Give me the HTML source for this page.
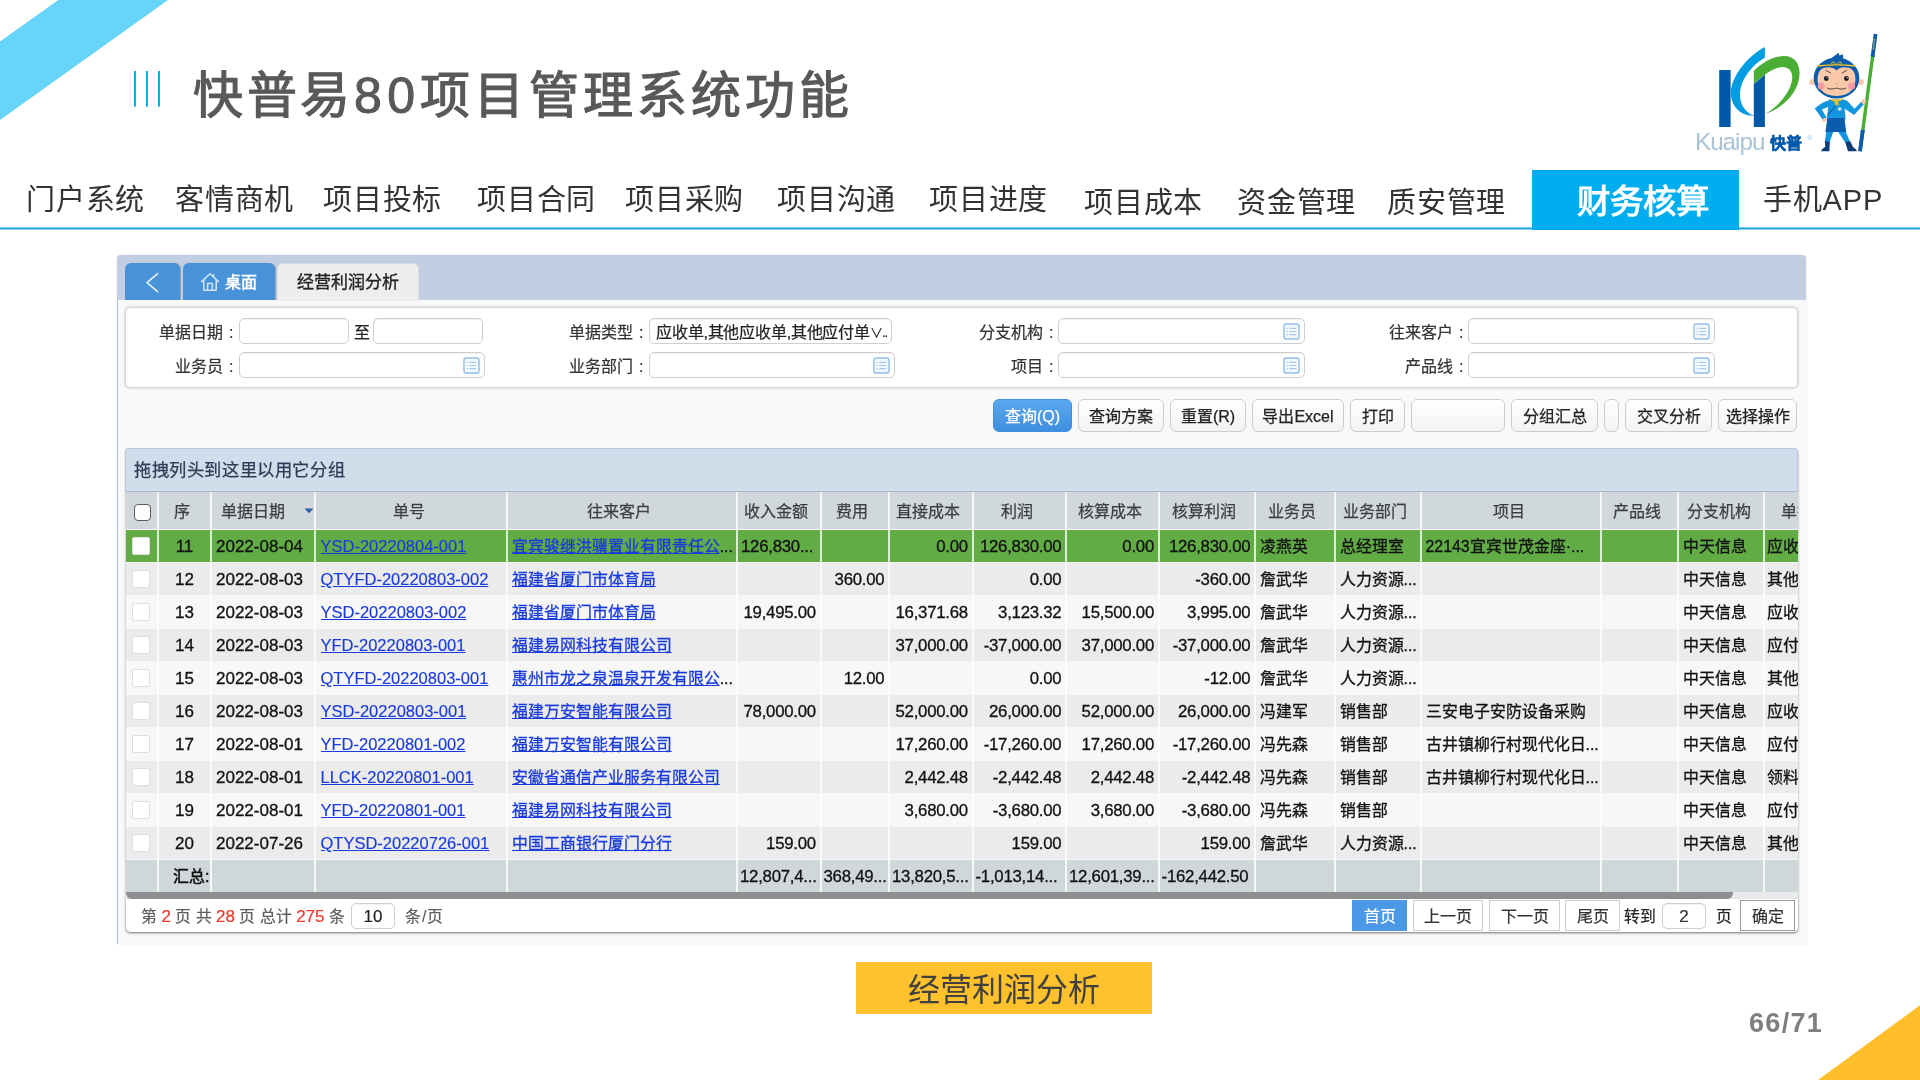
<!DOCTYPE html>
<html lang="zh-CN"><head><meta charset="utf-8"><title>快普易80项目管理系统功能</title>
<style>
html,body{margin:0;padding:0;}
body{width:1920px;height:1080px;position:relative;overflow:hidden;background:#fff;
 font-family:"Liberation Sans",sans-serif;color:#222;will-change:transform;}
.a{position:absolute;white-space:nowrap;}
.t{position:absolute;white-space:nowrap;overflow:hidden;}
/* slide chrome */
#title{left:193px;top:61px;height:70px;line-height:70px;font-size:50px;font-weight:400;color:#595959;letter-spacing:4.1px;-webkit-text-stroke:1.2px #595959;}
#title i{font-style:normal;letter-spacing:3.7px;}
#title span{letter-spacing:5.3px;-webkit-text-stroke-width:1px;}
.nav{top:180px;height:40px;line-height:40px;font-size:29px;color:#333;letter-spacing:0.8px;}
.nav.lo{top:183px;}
#navact{left:1532px;top:170px;width:207px;height:59.5px;background:#00aeef;}
#navactt{left:1532px;top:170px;width:207px;height:59px;line-height:64px;text-align:center;color:#fff;font-size:33.5px;font-weight:bold;letter-spacing:0.2px;text-indent:15px;}
#cap{left:856px;top:962px;width:296px;height:52px;background:#ffc12c;line-height:56px;text-align:center;font-size:32px;color:#404040;}
#lgk{left:1695px;top:127px;height:30px;line-height:30px;font-size:24.3px;letter-spacing:-1.05px;color:#a9c3d6;}
#lgc{left:1770px;top:131px;height:26px;line-height:26px;font-size:16px;font-weight:bold;color:#0058a9;-webkit-text-stroke:0.3px #0058a9;letter-spacing:0.2px;}
#pg{left:1749px;top:1005px;height:36px;line-height:36px;font-size:27px;font-weight:bold;color:#7f7f7f;letter-spacing:1.3px;}

/* ---- embedded app screenshot ---- */
#frame{left:117px;top:255px;width:1689px;height:689px;background:#f9f9f9;border-radius:4px 4px 0 0;box-shadow:0 0 3px rgba(0,0,0,.10);}
#frameL{left:117px;top:300px;width:1px;height:644px;background:#adc0da;}
#tabband{left:117px;top:255px;width:1689px;height:45px;background:#c2cee2;border-radius:4px 4px 0 0;}
.tabb{top:263px;height:37px;background:#4892d8;border-radius:6px 6px 0 0;box-shadow:1px 0 1px rgba(0,0,0,.22);}
#tabact{left:277px;top:263px;width:142px;height:38px;background:#eee;border-radius:6px 6px 0 0;border:1px solid #d9dde5;border-bottom:none;box-sizing:border-box;}
#tabactt{left:277px;top:264px;width:142px;height:37px;line-height:37px;text-align:center;font-size:17px;color:#222;-webkit-text-stroke:0.35px #222;}
#tabhome{left:225px;top:264px;height:37px;line-height:37px;font-size:16px;font-weight:bold;color:#fff;}
#card{left:125px;top:307px;width:1673px;height:81px;background:#fff;border:1px solid #d6d6d6;border-radius:5px;box-sizing:border-box;box-shadow:0 0 3px rgba(0,0,0,.22);}
.lab{height:28px;line-height:29px;font-size:16px;color:#333;-webkit-text-stroke-width:0.22px;text-align:right;width:120px;}
.lab i{font-style:normal;margin-left:6px;}
.inp{height:26px;background:#fff;border:1px solid #cfcfcf;border-radius:5px;box-sizing:border-box;box-shadow:inset 0 1px 1px rgba(0,0,0,.06);}
.inpt{height:28px;line-height:29px;font-size:16px;color:#222;-webkit-text-stroke-width:0.2px;}
.btn{top:399px;height:33px;line-height:33px;text-align:center;font-size:16px;color:#222;-webkit-text-stroke-width:0.25px;background:linear-gradient(#fff,#f3f3f3);border:1px solid #cdcdcd;border-radius:6px;box-sizing:border-box;}
.btn.pri{background:linear-gradient(#5aa8ee,#3f8fe0);border-color:#3f8fe0;color:#fff;}
#grp{left:125px;top:448px;width:1673px;height:44px;background:#d2ddeb;border:1px solid #b9c8dc;border-bottom:1px solid #a9bad2;border-radius:4px 4px 0 0;box-sizing:border-box;}
#grpt{left:134px;top:449px;height:43px;line-height:43px;font-size:17.25px;letter-spacing:0.6px;color:#2b3c55;-webkit-text-stroke-width:0.25px;}
#gridsh{left:125.5px;top:449px;width:1672.8px;height:482.5px;border-radius:4px;box-shadow:0 1px 3px rgba(0,0,0,.35);background:#f8f8f8;}
#thead{left:126px;top:492px;width:1672px;height:37px;background:#d1d8dc;}
.th{top:493px;height:37px;line-height:38px;font-size:16px;color:#3e3e3e;text-align:center;-webkit-text-stroke-width:0.25px;}
.vs{width:2px;background:rgba(255,255,255,.78);}
.row{left:126px;width:1672px;height:32px;}
.c{height:33px;line-height:33px;font-size:15.9px;color:#111;-webkit-text-stroke-width:0.3px;}
.n{font-size:17px;text-align:right;}
.m{font-size:16.8px;letter-spacing:-0.25px;text-align:right;}
.l{font-size:16.5px;color:#1a3bdc;text-decoration:underline;-webkit-text-stroke-width:0.15px;}
.lc{color:#1a3bdc;text-decoration:underline;}
.cb{left:132px;width:18px;height:18px;background:#fff;border:1px solid #dedede;border-radius:2px;box-sizing:border-box;}
#hcb{left:134px;top:504px;width:17px;height:17px;background:#fff;border:1.5px solid #5a5a5a;border-radius:4px;box-sizing:border-box;}
#sbtrack{left:126px;top:892px;width:1672px;height:7px;background:#e9e9e9;}
#sb{left:126px;top:892px;width:1607px;height:7px;background:#8e8e8e;border-radius:0 0 6px 6px;}
#foot{left:126px;top:899px;width:1672px;height:33px;background:#fff;border-radius:0 0 5px 5px;box-shadow:0 1px 2px rgba(0,0,0,.25);}
.ft{top:900px;height:33px;line-height:33px;font-size:15.8px;color:#5c5c5c;-webkit-text-stroke-width:0.2px;}
.ft b{font-weight:normal;color:#ea3a2d;font-size:17px;}
.pb{top:900px;height:31px;line-height:32px;font-size:16px;color:#333;-webkit-text-stroke-width:0.2px;text-align:center;background:#fff;border:1px solid #cfcfcf;box-sizing:border-box;}

</style></head>
<body>
<svg class="a" style="left:0;top:0" width="1920" height="1080" viewBox="0 0 1920 1080">
<polygon points="58.3,0 168,0 0,120 0,41.5" fill="#67d4fa"/>
<polygon points="1920,1005.3 1920,1080 1818,1080" fill="#ffbf2b"/>
<rect x="134" y="71" width="2" height="35.7" fill="#00b0f0"/><rect x="146" y="71" width="2" height="35.7" fill="#00b0f0"/><rect x="158" y="71" width="2" height="35.7" fill="#00b0f0"/>
<rect x="0" y="227.4" width="1920" height="2.1" fill="#1ca7e4"/>
</svg>
<div id="title" class="a"><i>快普易</i><span>80</span>项目管理系统功能</div>
<svg class="a" style="left:1690px;top:25px" width="215" height="140" viewBox="1690 25 215 140">
<rect x="1719.2" y="70" width="11.4" height="57" fill="#0058a9"/>
<path d="M1753.8 84 L1764.9 74.4 V127 H1753.8 Z" fill="#0058a9"/>
<path d="M1764.9 47 C1748 56 1731.5 75 1730.8 93 C1731 106.5 1741 116.2 1753.8 115.6 C1745.5 112.5 1740 104.5 1740 95 C1740 80.5 1751 66 1764.9 57.6 Z" fill="#009de3"/>
<path d="M1753.8 70.9 C1762 62.5 1774 56 1784 56 C1794 56 1799.6 63 1799.6 73.5 C1799 92 1783.5 108 1765.2 113.8 C1780 105.5 1792 90 1792.3 77 C1792.2 70.4 1788 66.9 1782.7 66.9 C1775 67 1764 74 1753.8 84 Z" fill="#4aae34"/>
<circle cx="1809.6" cy="137.4" r="1.7" fill="none" stroke="#8fc3e6" stroke-width="0.7"/>
<path d="M1875.6 34 L1860 151.2" stroke="#4aae34" stroke-width="3.4" fill="none"/>
<path d="M1875.6 34 L1872.7 56" stroke="#0b5cad" stroke-width="3.6" fill="none"/>
<path d="M1862.7 131 L1860 151.2" stroke="#0b5cad" stroke-width="3.8" fill="none"/>
<path d="M1870.6 55.5 L1875 56.2 M1860.6 130.6 L1865 131.2" stroke="#0b5cad" stroke-width="1.6" fill="none"/>
<path d="M1874.6 39 L1873.2 50" stroke="#e9c63a" stroke-width="1.3" stroke-dasharray="1 0.8" fill="none"/>
<path d="M1826.6 130 L1833.6 131 L1829.6 142.4 L1824.6 142.4 Z" fill="#1396df"/>
<path d="M1837.6 131 L1845 130 L1850.4 142.4 L1845.4 142.8 Z" fill="#1396df"/>
<path d="M1825 141.4 H1829.8 L1829.4 151.2 H1821 C1821.6 148.8 1824 148.2 1825.2 146.8 Z" fill="#0c3c73"/>
<path d="M1845.2 142 L1850.2 141.2 L1853 147 C1854.6 148.6 1856.4 149 1856.8 151.2 H1848 Z" fill="#0c3c73"/>
<path d="M1829.6 100 C1824 101.6 1818.4 105 1814.8 108.6 L1822.6 119.6 L1826.6 117.6 L1821.8 109.4 L1829 106.4 Z" fill="#1396df"/>
<path d="M1842.8 99.6 L1846.8 100.4 L1854.6 108.8 L1861.4 101.4 L1864 104 L1854.2 115 L1842.8 107.4 Z" fill="#1396df"/>
<ellipse cx="1824.6" cy="120" rx="2.6" ry="1.7" fill="#fbc9a9" transform="rotate(-25 1824.6 120)"/>
<circle cx="1863.6" cy="101.6" r="2.4" fill="#fbc9a9"/>
<path d="M1829 99.4 H1844 L1845.6 119.4 H1826.8 Z" fill="#1396df"/>
<path d="M1827.4 118 H1844.4 L1846.2 132 H1825.4 Z" fill="#0b5cad"/>
<path d="M1836 105.6 L1827.4 115.4" stroke="#0c3c73" stroke-width="0.8" fill="none"/>
<circle cx="1839.6" cy="109" r="1.9" fill="#cfe6f6" stroke="#5aa9dc" stroke-width="0.6"/>
<path d="M1829.6 59.6 L1838.6 52.8 L1839.4 55.6 L1842.8 54.2 L1843.4 58.4 Z" fill="#0b5cad"/>
<circle cx="1812.2" cy="82" r="3.1" fill="#fbc9a9"/><circle cx="1860.8" cy="82" r="3.1" fill="#fbc9a9"/>
<ellipse cx="1836.5" cy="78" rx="22.8" ry="20.6" fill="#0b5cad"/>
<path d="M1836.5 70.4 C1833 66.6 1825.6 66 1821 69.6 C1816.6 73.4 1816.6 83 1820 88.6 C1823.6 94 1830 96 1836.5 96 C1843 96 1849.4 94 1853 88.6 C1856.4 83 1856.4 73.4 1852 69.6 C1847.4 66 1840 66.6 1836.5 70.4 Z" fill="#fbc9a9"/>
<circle cx="1821.2" cy="86" r="3.5" fill="#f79a9f"/><circle cx="1851.6" cy="86" r="3.5" fill="#f79a9f"/>
<circle cx="1826.3" cy="78.5" r="2.4" fill="#121821"/><circle cx="1846.4" cy="78.5" r="2.4" fill="#121821"/>
<circle cx="1827" cy="77.7" r="0.6" fill="#fff"/><circle cx="1847.1" cy="77.7" r="0.6" fill="#fff"/>
<path d="M1826 70.4 L1830.6 73 M1846.6 70.4 L1842 73" stroke="#23262b" stroke-width="0.8" fill="none" stroke-linecap="round"/>
<path d="M1835.4 83.6 v0.8 M1837.6 83.6 v0.8" stroke="#6b4a3a" stroke-width="0.6" fill="none"/>
<path d="M1827.4 88.2 C1829 89.4 1833 89.4 1836.5 88 C1840 89.4 1844 89.4 1845.8 88.2" stroke="#23262b" stroke-width="0.8" fill="none" stroke-linecap="round"/>
<path d="M1817.4 66 C1828 64.8 1845 64.8 1855.4 66" stroke="#f2c41c" stroke-width="1.3" fill="none"/>
<path d="M1835.6 64.8 C1835.8 61.6 1831.8 61 1831.4 63.4 C1831.4 64.6 1833 64.6 1833.2 63.6 M1837.4 64.8 C1837.2 61.6 1841.2 61 1841.6 63.4 C1841.6 64.6 1840 64.6 1839.8 63.6" stroke="#f2c41c" stroke-width="1" fill="none"/>
<path d="M1831.4 98.4 C1834 100 1839.6 100 1842.6 98.2 L1843 99.6 C1840 101.4 1838.4 101.6 1837.6 101.8 L1839.6 105.4 L1837 104.4 L1836 106.6 L1834.4 101.6 C1833 101.4 1832 100.8 1831 99.8 Z" fill="#f2c41c"/>
</svg>

<div id="lgk" class="a">Kuaipu</div><div id="lgc" class="a">快普</div>
<div class="a nav" style="left:26px">门户系统</div>
<div class="a nav" style="left:175px">客情商机</div>
<div class="a nav" style="left:323px">项目投标</div>
<div class="a nav" style="left:477px">项目合同</div>
<div class="a nav" style="left:625px">项目采购</div>
<div class="a nav" style="left:777px">项目沟通</div>
<div class="a nav" style="left:929px">项目进度</div>
<div class="a nav lo" style="left:1084px">项目成本</div>
<div class="a nav lo" style="left:1237px">资金管理</div>
<div class="a nav lo" style="left:1387px">质安管理</div>
<div class="a nav" style="left:1763px">手机APP</div>
<div id="navact" class="a"></div>
<div id="navactt" class="a">财务核算</div>
<div id="frame" class="a"></div><div id="tabband" class="a"></div><div id="frameL" class="a"></div>
<div class="a tabb" style="left:125px;width:55px"></div><div class="a tabb" style="left:183px;width:92px"></div>
<div id="tabact" class="a"></div><div id="tabactt" class="a">经营利润分析</div>
<svg class="a" style="left:140px;top:268px" width="30" height="30" viewBox="0 0 30 30"><path d="M17.6 5.6 L7 14.6 L17.6 23.6" fill="none" stroke="#fff" stroke-width="1.7" stroke-linecap="round" stroke-linejoin="round" opacity=".85"/></svg>
<svg class="a" style="left:199px;top:271px" width="22" height="22" viewBox="0 0 22 22"><path d="M2.6 10.6 L11 2.8 L19.4 10.6 M4.8 9 V19.3 H17.2 V9 M8.6 19.3 V12.6 H13.4 V19.3 M14.6 3.6 V6" fill="none" stroke="#fff" stroke-width="1.5" stroke-linejoin="round" stroke-linecap="round" opacity=".75"/></svg>
<div id="tabhome" class="a">桌面</div>
<div id="card" class="a"></div>
<div class="a lab" style="left:113.5px;top:318px">单据日期<i>:</i></div>
<div class="a lab" style="left:113.5px;top:352px">业务员<i>:</i></div>
<div class="a lab" style="left:523.5px;top:318px">单据类型<i>:</i></div>
<div class="a lab" style="left:523.5px;top:352px">业务部门<i>:</i></div>
<div class="a lab" style="left:933.5px;top:318px">分支机构<i>:</i></div>
<div class="a lab" style="left:933.5px;top:352px">项目<i>:</i></div>
<div class="a lab" style="left:1343.5px;top:318px">往来客户<i>:</i></div>
<div class="a lab" style="left:1343.5px;top:352px">产品线<i>:</i></div>
<div class="a inp" style="left:239px;top:318px;width:110px"></div>
<div class="a inp" style="left:373px;top:318px;width:110px"></div>
<div class="a inp" style="left:239px;top:352px;width:246px"></div>
<svg class="a" style="left:463px;top:357px" width="17" height="17" viewBox="0 0 18 18"><rect x="1" y="1" width="16" height="16" rx="2.5" fill="#f3f8fd" stroke="#93bfea" stroke-width="1.5"/><g stroke="#a6c9ec" stroke-width="1.3"><path d="M6.6 5.6H14M6.6 9H14M6.6 12.4H14"/><path d="M3.8 5.6H5.2M3.8 9H5.2M3.8 12.4H5.2"/></g></svg>
<div class="a inp" style="left:649px;top:318px;width:243px"></div>
<div class="a inp" style="left:649px;top:352px;width:246px"></div>
<svg class="a" style="left:873px;top:357px" width="17" height="17" viewBox="0 0 18 18"><rect x="1" y="1" width="16" height="16" rx="2.5" fill="#f3f8fd" stroke="#93bfea" stroke-width="1.5"/><g stroke="#a6c9ec" stroke-width="1.3"><path d="M6.6 5.6H14M6.6 9H14M6.6 12.4H14"/><path d="M3.8 5.6H5.2M3.8 9H5.2M3.8 12.4H5.2"/></g></svg>
<div class="a inp" style="left:1058px;top:318px;width:247px"></div>
<svg class="a" style="left:1283px;top:323px" width="17" height="17" viewBox="0 0 18 18"><rect x="1" y="1" width="16" height="16" rx="2.5" fill="#f3f8fd" stroke="#93bfea" stroke-width="1.5"/><g stroke="#a6c9ec" stroke-width="1.3"><path d="M6.6 5.6H14M6.6 9H14M6.6 12.4H14"/><path d="M3.8 5.6H5.2M3.8 9H5.2M3.8 12.4H5.2"/></g></svg>
<div class="a inp" style="left:1058px;top:352px;width:247px"></div>
<svg class="a" style="left:1283px;top:357px" width="17" height="17" viewBox="0 0 18 18"><rect x="1" y="1" width="16" height="16" rx="2.5" fill="#f3f8fd" stroke="#93bfea" stroke-width="1.5"/><g stroke="#a6c9ec" stroke-width="1.3"><path d="M6.6 5.6H14M6.6 9H14M6.6 12.4H14"/><path d="M3.8 5.6H5.2M3.8 9H5.2M3.8 12.4H5.2"/></g></svg>
<div class="a inp" style="left:1468px;top:318px;width:247px"></div>
<svg class="a" style="left:1693px;top:323px" width="17" height="17" viewBox="0 0 18 18"><rect x="1" y="1" width="16" height="16" rx="2.5" fill="#f3f8fd" stroke="#93bfea" stroke-width="1.5"/><g stroke="#a6c9ec" stroke-width="1.3"><path d="M6.6 5.6H14M6.6 9H14M6.6 12.4H14"/><path d="M3.8 5.6H5.2M3.8 9H5.2M3.8 12.4H5.2"/></g></svg>
<div class="a inp" style="left:1468px;top:352px;width:247px"></div>
<svg class="a" style="left:1693px;top:357px" width="17" height="17" viewBox="0 0 18 18"><rect x="1" y="1" width="16" height="16" rx="2.5" fill="#f3f8fd" stroke="#93bfea" stroke-width="1.5"/><g stroke="#a6c9ec" stroke-width="1.3"><path d="M6.6 5.6H14M6.6 9H14M6.6 12.4H14"/><path d="M3.8 5.6H5.2M3.8 9H5.2M3.8 12.4H5.2"/></g></svg>
<div class="a inpt" style="left:354px;top:318px">至</div>
<div class="t inpt" style="left:656px;top:318px;width:222px;letter-spacing:-0.2px">应收单,其他应收单,其他应付单</div>
<div class="a inpt" style="left:870px;top:318px;font-size:13px;letter-spacing:-1px">&#x2228;..</div>
<div class="a btn pri" style="left:993px;width:79px">查询(Q)</div>
<div class="a btn" style="left:1078px;width:86px">查询方案</div>
<div class="a btn" style="left:1170px;width:76px">重置(R)</div>
<div class="a btn" style="left:1252px;width:92px">导出Excel</div>
<div class="a btn" style="left:1350px;width:55px">打印</div>
<div class="a btn" style="left:1411px;width:94px"></div>
<div class="a btn" style="left:1511px;width:87px">分组汇总</div>
<div class="a btn" style="left:1604px;width:15px"></div>
<div class="a btn" style="left:1625px;width:87px">交叉分析</div>
<div class="a btn" style="left:1718px;width:79px">选择操作</div>
<div id="gridsh" class="a"></div>
<div id="grp" class="a"></div><div id="grpt" class="a">拖拽列头到这里以用它分组</div>
<div id="thead" class="a"></div>
<div class="a th" style="left:155.5px;width:53.0px">序</div>
<div class="a th" style="left:211.0px;width:104.5px;text-align:left;text-indent:10px">单据日期</div>
<div class="a th" style="left:313.0px;width:191.2px">单号</div>
<div class="a th" style="left:504.2px;width:230.3px">往来客户</div>
<div class="a th" style="left:734.5px;width:83.5px">收入金额</div>
<div class="a th" style="left:818.0px;width:68.5px">费用</div>
<div class="a th" style="left:886.5px;width:83.5px">直接成本</div>
<div class="a th" style="left:970.0px;width:93.5px">利润</div>
<div class="a th" style="left:1063.5px;width:92.6px">核算成本</div>
<div class="a th" style="left:1156.1px;width:96.4px">核算利润</div>
<div class="a th" style="left:1252.5px;width:79.5px">业务员</div>
<div class="a th" style="left:1332.0px;width:86.0px">业务部门</div>
<div class="a th" style="left:1418.0px;width:181.0px">项目</div>
<div class="a th" style="left:1599.0px;width:76.5px">产品线</div>
<div class="a th" style="left:1675.5px;width:86.3px">分支机构</div>
<div class="t th" style="left:1765px;width:33px;text-align:left;text-indent:16px">单据</div>
<svg class="a" style="left:304px;top:508px" width="10" height="6" viewBox="0 0 10 6"><path d="M0.5 0.5H9.5L5 5.2Z" fill="#2d5da8"/></svg>
<div id="hcb" class="a"></div>
<div class="a row" style="top:530px;background:#62ac46"></div>
<div class="a cb" style="top:537px"></div>
<div class="t c n" style="left:158.0px;top:530px;width:53.0px;text-align:center">11</div>
<div class="t c n" style="left:216.0px;top:530px;width:99.5px;text-align:left">2022-08-04</div>
<div class="t c l" style="left:320.5px;top:530px;width:186.2px">YSD-20220804-001</div>
<div class="t c" style="left:511.7px;top:530px;width:225.3px"><span class="lc">宜宾骏继洪骥置业有限责任公</span>...</div>
<div class="t c m" style="left:741.0px;top:530px;width:79.5px;text-align:left">126,830...</div>
<div class="t c m" style="left:889.0px;top:530px;width:78.9px">0.00</div>
<div class="t c m" style="left:972.5px;top:530px;width:88.9px">126,830.00</div>
<div class="t c m" style="left:1066.0px;top:530px;width:88.0px">0.00</div>
<div class="t c m" style="left:1158.6px;top:530px;width:91.8px">126,830.00</div>
<div class="t c" style="left:1260.0px;top:530px;width:74.5px">凌燕英</div>
<div class="t c" style="left:1339.5px;top:530px;width:81.0px">总经理室</div>
<div class="t c" style="left:1425.5px;top:530px;width:176.0px">22143宜宾世茂金座·...</div>
<div class="t c" style="left:1683.0px;top:530px;width:81.3px">中天信息</div>
<div class="t c" style="left:1767.3px;top:530px;width:30.7px">应收</div>
<div class="a row" style="top:563px;background:#ebebeb"></div>
<div class="a cb" style="top:570px"></div>
<div class="t c n" style="left:158.0px;top:563px;width:53.0px;text-align:center">12</div>
<div class="t c n" style="left:216.0px;top:563px;width:99.5px;text-align:left">2022-08-03</div>
<div class="t c l" style="left:320.5px;top:563px;width:186.2px">QTYFD-20220803-002</div>
<div class="t c lc" style="left:511.7px;top:563px;width:225.3px">福建省厦门市体育局</div>
<div class="t c m" style="left:820.5px;top:563px;width:63.9px">360.00</div>
<div class="t c m" style="left:972.5px;top:563px;width:88.9px">0.00</div>
<div class="t c m" style="left:1158.6px;top:563px;width:91.8px">-360.00</div>
<div class="t c" style="left:1260.0px;top:563px;width:74.5px">詹武华</div>
<div class="t c" style="left:1339.5px;top:563px;width:81.0px">人力资源...</div>
<div class="t c" style="left:1683.0px;top:563px;width:81.3px">中天信息</div>
<div class="t c" style="left:1767.3px;top:563px;width:30.7px">其他</div>
<div class="a row" style="top:596px;background:#f7f7f7"></div>
<div class="a cb" style="top:603px"></div>
<div class="t c n" style="left:158.0px;top:596px;width:53.0px;text-align:center">13</div>
<div class="t c n" style="left:216.0px;top:596px;width:99.5px;text-align:left">2022-08-03</div>
<div class="t c l" style="left:320.5px;top:596px;width:186.2px">YSD-20220803-002</div>
<div class="t c lc" style="left:511.7px;top:596px;width:225.3px">福建省厦门市体育局</div>
<div class="t c m" style="left:737.0px;top:596px;width:78.9px">19,495.00</div>
<div class="t c m" style="left:889.0px;top:596px;width:78.9px">16,371.68</div>
<div class="t c m" style="left:972.5px;top:596px;width:88.9px">3,123.32</div>
<div class="t c m" style="left:1066.0px;top:596px;width:88.0px">15,500.00</div>
<div class="t c m" style="left:1158.6px;top:596px;width:91.8px">3,995.00</div>
<div class="t c" style="left:1260.0px;top:596px;width:74.5px">詹武华</div>
<div class="t c" style="left:1339.5px;top:596px;width:81.0px">人力资源...</div>
<div class="t c" style="left:1683.0px;top:596px;width:81.3px">中天信息</div>
<div class="t c" style="left:1767.3px;top:596px;width:30.7px">应收</div>
<div class="a row" style="top:629px;background:#ebebeb"></div>
<div class="a cb" style="top:636px"></div>
<div class="t c n" style="left:158.0px;top:629px;width:53.0px;text-align:center">14</div>
<div class="t c n" style="left:216.0px;top:629px;width:99.5px;text-align:left">2022-08-03</div>
<div class="t c l" style="left:320.5px;top:629px;width:186.2px">YFD-20220803-001</div>
<div class="t c lc" style="left:511.7px;top:629px;width:225.3px">福建易网科技有限公司</div>
<div class="t c m" style="left:889.0px;top:629px;width:78.9px">37,000.00</div>
<div class="t c m" style="left:972.5px;top:629px;width:88.9px">-37,000.00</div>
<div class="t c m" style="left:1066.0px;top:629px;width:88.0px">37,000.00</div>
<div class="t c m" style="left:1158.6px;top:629px;width:91.8px">-37,000.00</div>
<div class="t c" style="left:1260.0px;top:629px;width:74.5px">詹武华</div>
<div class="t c" style="left:1339.5px;top:629px;width:81.0px">人力资源...</div>
<div class="t c" style="left:1683.0px;top:629px;width:81.3px">中天信息</div>
<div class="t c" style="left:1767.3px;top:629px;width:30.7px">应付</div>
<div class="a row" style="top:662px;background:#f7f7f7"></div>
<div class="a cb" style="top:669px"></div>
<div class="t c n" style="left:158.0px;top:662px;width:53.0px;text-align:center">15</div>
<div class="t c n" style="left:216.0px;top:662px;width:99.5px;text-align:left">2022-08-03</div>
<div class="t c l" style="left:320.5px;top:662px;width:186.2px">QTYFD-20220803-001</div>
<div class="t c" style="left:511.7px;top:662px;width:225.3px"><span class="lc">惠州市龙之泉温泉开发有限公</span>...</div>
<div class="t c m" style="left:820.5px;top:662px;width:63.9px">12.00</div>
<div class="t c m" style="left:972.5px;top:662px;width:88.9px">0.00</div>
<div class="t c m" style="left:1158.6px;top:662px;width:91.8px">-12.00</div>
<div class="t c" style="left:1260.0px;top:662px;width:74.5px">詹武华</div>
<div class="t c" style="left:1339.5px;top:662px;width:81.0px">人力资源...</div>
<div class="t c" style="left:1683.0px;top:662px;width:81.3px">中天信息</div>
<div class="t c" style="left:1767.3px;top:662px;width:30.7px">其他</div>
<div class="a row" style="top:695px;background:#ebebeb"></div>
<div class="a cb" style="top:702px"></div>
<div class="t c n" style="left:158.0px;top:695px;width:53.0px;text-align:center">16</div>
<div class="t c n" style="left:216.0px;top:695px;width:99.5px;text-align:left">2022-08-03</div>
<div class="t c l" style="left:320.5px;top:695px;width:186.2px">YSD-20220803-001</div>
<div class="t c lc" style="left:511.7px;top:695px;width:225.3px">福建万安智能有限公司</div>
<div class="t c m" style="left:737.0px;top:695px;width:78.9px">78,000.00</div>
<div class="t c m" style="left:889.0px;top:695px;width:78.9px">52,000.00</div>
<div class="t c m" style="left:972.5px;top:695px;width:88.9px">26,000.00</div>
<div class="t c m" style="left:1066.0px;top:695px;width:88.0px">52,000.00</div>
<div class="t c m" style="left:1158.6px;top:695px;width:91.8px">26,000.00</div>
<div class="t c" style="left:1260.0px;top:695px;width:74.5px">冯建军</div>
<div class="t c" style="left:1339.5px;top:695px;width:81.0px">销售部</div>
<div class="t c" style="left:1425.5px;top:695px;width:176.0px">三安电子安防设备采购</div>
<div class="t c" style="left:1683.0px;top:695px;width:81.3px">中天信息</div>
<div class="t c" style="left:1767.3px;top:695px;width:30.7px">应收</div>
<div class="a row" style="top:728px;background:#f7f7f7"></div>
<div class="a cb" style="top:735px"></div>
<div class="t c n" style="left:158.0px;top:728px;width:53.0px;text-align:center">17</div>
<div class="t c n" style="left:216.0px;top:728px;width:99.5px;text-align:left">2022-08-01</div>
<div class="t c l" style="left:320.5px;top:728px;width:186.2px">YFD-20220801-002</div>
<div class="t c lc" style="left:511.7px;top:728px;width:225.3px">福建万安智能有限公司</div>
<div class="t c m" style="left:889.0px;top:728px;width:78.9px">17,260.00</div>
<div class="t c m" style="left:972.5px;top:728px;width:88.9px">-17,260.00</div>
<div class="t c m" style="left:1066.0px;top:728px;width:88.0px">17,260.00</div>
<div class="t c m" style="left:1158.6px;top:728px;width:91.8px">-17,260.00</div>
<div class="t c" style="left:1260.0px;top:728px;width:74.5px">冯先森</div>
<div class="t c" style="left:1339.5px;top:728px;width:81.0px">销售部</div>
<div class="t c" style="left:1425.5px;top:728px;width:176.0px">古井镇柳行村现代化日...</div>
<div class="t c" style="left:1683.0px;top:728px;width:81.3px">中天信息</div>
<div class="t c" style="left:1767.3px;top:728px;width:30.7px">应付</div>
<div class="a row" style="top:761px;background:#ebebeb"></div>
<div class="a cb" style="top:768px"></div>
<div class="t c n" style="left:158.0px;top:761px;width:53.0px;text-align:center">18</div>
<div class="t c n" style="left:216.0px;top:761px;width:99.5px;text-align:left">2022-08-01</div>
<div class="t c l" style="left:320.5px;top:761px;width:186.2px">LLCK-20220801-001</div>
<div class="t c lc" style="left:511.7px;top:761px;width:225.3px">安徽省通信产业服务有限公司</div>
<div class="t c m" style="left:889.0px;top:761px;width:78.9px">2,442.48</div>
<div class="t c m" style="left:972.5px;top:761px;width:88.9px">-2,442.48</div>
<div class="t c m" style="left:1066.0px;top:761px;width:88.0px">2,442.48</div>
<div class="t c m" style="left:1158.6px;top:761px;width:91.8px">-2,442.48</div>
<div class="t c" style="left:1260.0px;top:761px;width:74.5px">冯先森</div>
<div class="t c" style="left:1339.5px;top:761px;width:81.0px">销售部</div>
<div class="t c" style="left:1425.5px;top:761px;width:176.0px">古井镇柳行村现代化日...</div>
<div class="t c" style="left:1683.0px;top:761px;width:81.3px">中天信息</div>
<div class="t c" style="left:1767.3px;top:761px;width:30.7px">领料</div>
<div class="a row" style="top:794px;background:#f7f7f7"></div>
<div class="a cb" style="top:801px"></div>
<div class="t c n" style="left:158.0px;top:794px;width:53.0px;text-align:center">19</div>
<div class="t c n" style="left:216.0px;top:794px;width:99.5px;text-align:left">2022-08-01</div>
<div class="t c l" style="left:320.5px;top:794px;width:186.2px">YFD-20220801-001</div>
<div class="t c lc" style="left:511.7px;top:794px;width:225.3px">福建易网科技有限公司</div>
<div class="t c m" style="left:889.0px;top:794px;width:78.9px">3,680.00</div>
<div class="t c m" style="left:972.5px;top:794px;width:88.9px">-3,680.00</div>
<div class="t c m" style="left:1066.0px;top:794px;width:88.0px">3,680.00</div>
<div class="t c m" style="left:1158.6px;top:794px;width:91.8px">-3,680.00</div>
<div class="t c" style="left:1260.0px;top:794px;width:74.5px">冯先森</div>
<div class="t c" style="left:1339.5px;top:794px;width:81.0px">销售部</div>
<div class="t c" style="left:1683.0px;top:794px;width:81.3px">中天信息</div>
<div class="t c" style="left:1767.3px;top:794px;width:30.7px">应付</div>
<div class="a row" style="top:827px;background:#ebebeb"></div>
<div class="a cb" style="top:834px"></div>
<div class="t c n" style="left:158.0px;top:827px;width:53.0px;text-align:center">20</div>
<div class="t c n" style="left:216.0px;top:827px;width:99.5px;text-align:left">2022-07-26</div>
<div class="t c l" style="left:320.5px;top:827px;width:186.2px">QTYSD-20220726-001</div>
<div class="t c lc" style="left:511.7px;top:827px;width:225.3px">中国工商银行厦门分行</div>
<div class="t c m" style="left:737.0px;top:827px;width:78.9px">159.00</div>
<div class="t c m" style="left:972.5px;top:827px;width:88.9px">159.00</div>
<div class="t c m" style="left:1158.6px;top:827px;width:91.8px">159.00</div>
<div class="t c" style="left:1260.0px;top:827px;width:74.5px">詹武华</div>
<div class="t c" style="left:1339.5px;top:827px;width:81.0px">人力资源...</div>
<div class="t c" style="left:1683.0px;top:827px;width:81.3px">中天信息</div>
<div class="t c" style="left:1767.3px;top:827px;width:30.7px">其他</div>
<div class="a row" style="top:860px;background:#d0d7db"></div>
<div class="a c" style="left:173px;top:860px;-webkit-text-stroke-width:0.55px">汇总:</div>
<div class="t c m" style="left:740.0px;top:860px;width:80.5px;text-align:left">12,807,4...</div>
<div class="t c m" style="left:823.5px;top:860px;width:65.5px;text-align:left">368,49...</div>
<div class="t c m" style="left:892.0px;top:860px;width:80.5px;text-align:left">13,820,5...</div>
<div class="t c m" style="left:975.5px;top:860px;width:90.5px;text-align:left">-1,013,14...</div>
<div class="t c m" style="left:1069.0px;top:860px;width:89.6px;text-align:left">12,601,39...</div>
<div class="t c m" style="left:1161.6px;top:860px;width:93.4px;text-align:left">-162,442.50</div>
<div class="a vs" style="left:157px;top:492px;height:400px"></div>
<div class="a vs" style="left:210px;top:492px;height:400px"></div>
<div class="a vs" style="left:314px;top:492px;height:400px"></div>
<div class="a vs" style="left:506px;top:492px;height:400px"></div>
<div class="a vs" style="left:736px;top:492px;height:400px"></div>
<div class="a vs" style="left:820px;top:492px;height:400px"></div>
<div class="a vs" style="left:888px;top:492px;height:400px"></div>
<div class="a vs" style="left:972px;top:492px;height:400px"></div>
<div class="a vs" style="left:1065px;top:492px;height:400px"></div>
<div class="a vs" style="left:1158px;top:492px;height:400px"></div>
<div class="a vs" style="left:1254px;top:492px;height:400px"></div>
<div class="a vs" style="left:1334px;top:492px;height:400px"></div>
<div class="a vs" style="left:1420px;top:492px;height:400px"></div>
<div class="a vs" style="left:1600px;top:492px;height:400px"></div>
<div class="a vs" style="left:1677px;top:492px;height:400px"></div>
<div class="a vs" style="left:1763px;top:492px;height:400px"></div>
<div id="sbtrack" class="a"></div><div id="sb" class="a"></div><div id="foot" class="a"></div>
<div class="a ft" style="left:141px">第 <b>2</b> 页 共 <b>28</b> 页 总计 <b>275</b> 条</div>
<div class="a inp" style="left:351px;top:903px;width:44px;height:26px"></div><div class="a ft" style="left:351px;width:44px;text-align:center;color:#222;font-size:17px">10</div>
<div class="a ft" style="left:405px;letter-spacing:1px">条/页</div>
<div class="a pb" style="left:1352px;width:55px;background:#4a98e6;border-color:#4a98e6;color:#fff">首页</div>
<div class="a pb" style="left:1413px;width:70px">上一页</div>
<div class="a pb" style="left:1489px;width:71px">下一页</div>
<div class="a pb" style="left:1565px;width:55px">尾页</div>
<div class="a ft" style="left:1624px;color:#222">转到</div>
<div class="a inp" style="left:1662px;top:903px;width:44px;height:26px"></div><div class="a ft" style="left:1662px;width:44px;text-align:center;color:#333;font-size:17px">2</div>
<div class="a ft" style="left:1716px;color:#222">页</div>
<div class="a pb" style="left:1740px;width:55px;border-color:#9a9a9a">确定</div>

<div id="cap" class="a">经营利润分析</div>
<div id="pg" class="a">66/71</div>
</body></html>
